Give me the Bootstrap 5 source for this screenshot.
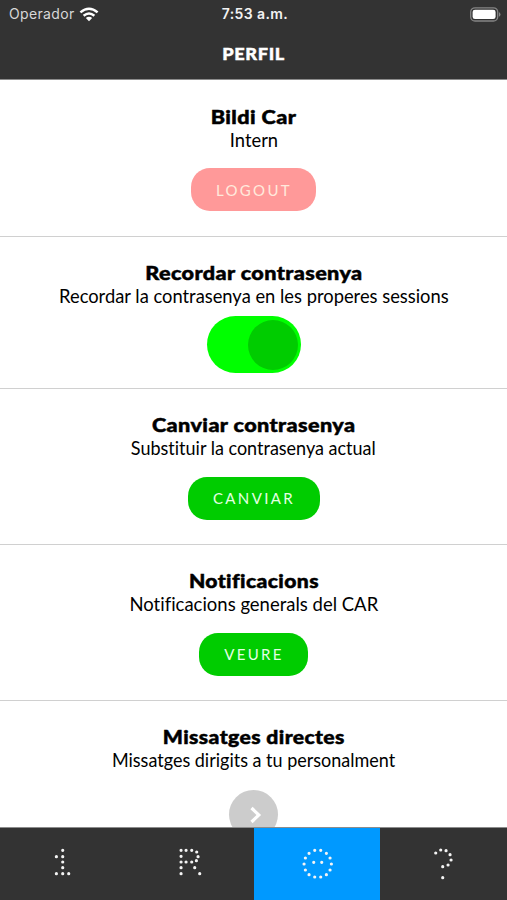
<!DOCTYPE html>
<html lang="ca">
<head>
<meta charset="utf-8">
<meta name="viewport" content="width=device-width, initial-scale=1">
<title>Perfil</title>
<link rel="stylesheet" href="https://cdn.jsdelivr.net/npm/bootstrap@5.3.0/dist/css/bootstrap.min.css">
<style>
body{font-family:Lato,"Liberation Sans",sans-serif;color:#000;background:#fff;font-variant-ligatures:none}
.app{height:900px}
.topbar{height:80px;background:#333;border-bottom:1px solid #8c8c8c}
.status{height:28px;font-family:Inter,"Liberation Sans",sans-serif;font-size:14px;line-height:28px;padding:0 6px 0 9px}
.status .carrier{color:#d8d8d8;letter-spacing:.35px}
.clock{font-weight:600;letter-spacing:.4px;color:#f2f2f2}
.heading{font-size:16.5px;font-weight:900;line-height:20px;margin:16px 0 0;letter-spacing:.6px}
.heading span,.block h2 span,.block p span{display:inline-block}
.heading span{transform:scaleX(1.1);-webkit-text-stroke:.4px #fff}
.block{height:156.4px;padding-top:24px;border-bottom:1px solid #d0d0d0}
.block:first-child{height:157px;padding-top:25px}
.block.short{height:151.6px}
.block h2{font-size:19.5px;font-weight:900;line-height:24px;margin:0;letter-spacing:.35px}
.block h2 span{transform:scaleX(1.11);-webkit-text-stroke:.5px #000}
.block:nth-child(n+4) h2 span{transform:scaleX(1.085)}
.block p{font-size:19px;line-height:22px;margin:0}
.block p span{transform:scaleX(.965)}
.block:nth-child(3) p span,.block:nth-child(5) p span{transform:scaleX(.947)}
.block:nth-child(4) p span{transform:scaleX(.973)}
.pill{height:43px;border-radius:19px;border:0;background:#0c0;color:#e4ffe4;font-size:15px;letter-spacing:2.35px;line-height:42px;padding:0 0 0 1px;margin-top:18px}
.pill:hover{background:#0b0;color:#fff}
.pill.out{background:#f99;color:#ffe9dc}
.block:first-child .pill{margin-top:17.4px}
.toggle{width:94px;height:57px;border-radius:29px;background:#0f0;margin-top:9px;padding:3px}
.knob{width:50px;height:50px;background:#0c0}
.go{width:49px;height:49px;background:#ccc;margin-top:18.6px}
.tabs{height:73px;background:#333;border-top:1px solid #8c8c8c}
.tabs svg{width:100%;height:73px;display:block}
.dots{fill:none;stroke:#f4f4f4;stroke-width:9.5;stroke-linecap:round}
.tabs .on{background:#09f}
</style>
<script src="https://cdn.jsdelivr.net/npm/bootstrap@5.3.0/dist/js/bootstrap.bundle.min.js"></script>
</head>
<body>
<div class="app d-flex flex-column overflow-hidden">
  <header class="topbar flex-shrink-0 text-white text-center">
    <div class="status d-flex align-items-center">
      <div class="col d-flex align-items-center"><span class="carrier">Operador</span>
        <svg class="ms-1" width="20" height="15" viewBox="0 0 20 15" fill="none" stroke="#fff" stroke-width="2.5"><path d="M1.4 5.4Q10-1.8 18.6 5.4M4.6 8.7Q10 4.2 15.4 8.7"/><path d="M10 14.2L6.8 11Q10 8.6 13.2 11Z" fill="#fff" stroke="none"/></svg>
      </div>
      <div class="clock">7:53 a.m.</div>
      <div class="col text-end d-flex justify-content-end">
        <svg width="31" height="15" viewBox="0 0 31 15"><rect x=".7" y=".8" width="27" height="13.2" rx="4.3" fill="none" stroke="#858585" stroke-width="1.3"/><rect x="2.6" y="2.7" width="23" height="9.4" rx="2.4" fill="#fff"/><path d="M29 5q3 2.4 0 4.8Z" fill="#858585"/></svg>
      </div>
    </div>
    <h1 class="heading"><span>PERFIL</span></h1>
  </header>
  <main class="flex-grow-1 overflow-hidden text-center">
    <section class="block"><h2><span>Bildi Car</span></h2><p><span>Intern</span></p><button class="btn pill out" style="width:125px">LOGOUT</button></section>
    <section class="block short"><h2><span>Recordar contrasenya</span></h2><p><span>Recordar la contrasenya en les properes sessions</span></p>
      <div class="toggle mx-auto d-flex justify-content-end align-items-center" role="switch" aria-checked="true"><div class="knob rounded-circle"></div></div></section>
    <section class="block"><h2><span>Canviar contrasenya</span></h2><p><span>Substituir la contrasenya actual</span></p><button class="btn pill" style="width:132px">CANVIAR</button></section>
    <section class="block"><h2><span>Notificacions</span></h2><p><span>Notificacions generals del CAR</span></p><button class="btn pill" style="width:109px">VEURE</button></section>
    <section class="block"><h2><span>Missatges directes</span></h2><p><span>Missatges dirigits a tu personalment</span></p>
      <div class="go rounded-circle mx-auto"><svg width="49" height="49" viewBox="0 0 49 49" fill="none" stroke="#fff" stroke-width="3.2" class="d-block"><path d="M22.5 18L29.8 25L22.5 32"/></svg></div></section>
  </main>
  <nav class="tabs flex-shrink-0 row g-0">
    <a class="col" href="#" aria-label="1"><svg viewBox="0 38 380 219"><path class="dots" d="M188 105h.1M169 124h.1M188 124h.1M188 140h.1M188 157h.1M169 175h.1M188 175h.1M206 175h.1"/></svg></a>
    <a class="col" href="#" aria-label="R"><svg viewBox="380 38 380 219"><path class="dots" d="M542 105h.1M542 123h.1M542 140h.1M542 157h.1M542 175h.1M557 105h.1M574 105h.1M589 110h.1M593 124h.1M588 136h.1M574 140h.1M557 140h.1M583 157h.1M598 175h.1"/></svg></a>
    <a class="col on" href="#" aria-label="Perfil"><svg viewBox="1 38 380 219"><path class="dots" d="M183 105h.1M201 105h.1M218 114h.1M229 128h.1M233 146h.1M229 164h.1M218 178h.1M201 185h.1M183 185h.1M166 178h.1M155 164h.1M151 146h.1M155 128h.1M166 114h.1M180 141h.1M204 141h.1"/></svg></a>
    <a class="col" href="#" aria-label="Ajuda"><svg viewBox="382 38 380 219"><path class="dots" d="M549 113h.1M564 104h.1M580 106h.1M592 118h.1M595 134h.1M586 149h.1M570 154h.1M570 187h.1"/></svg></a>
  </nav>
</div>
</body>
</html>
